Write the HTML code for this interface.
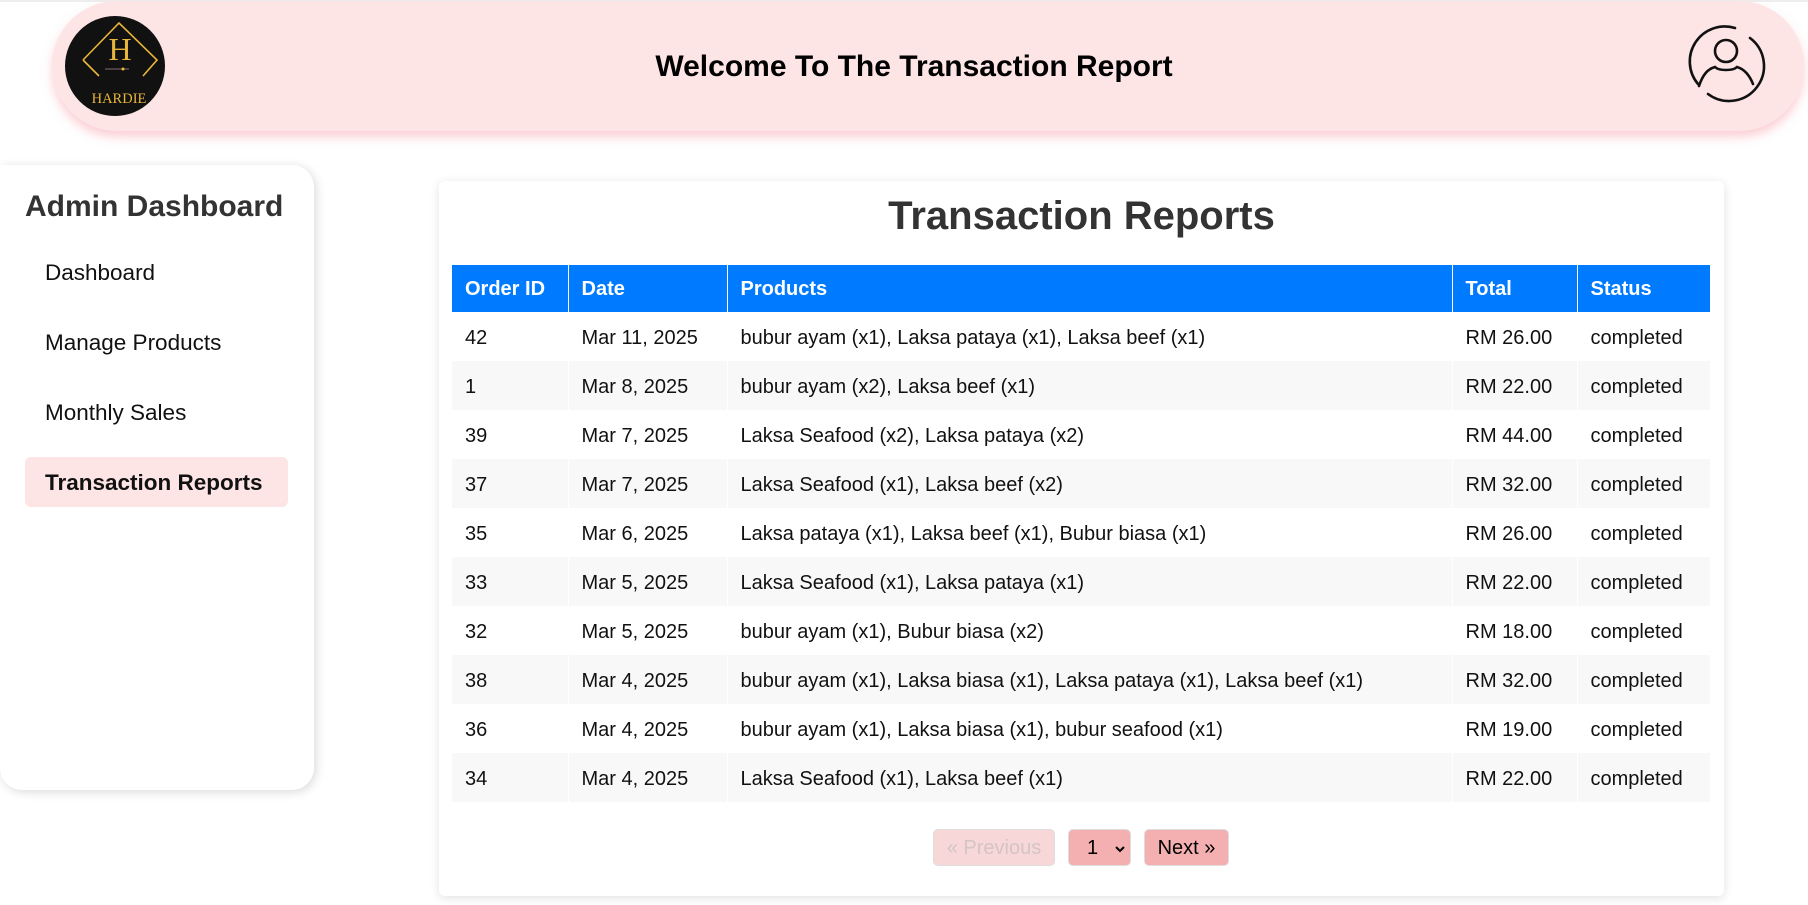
<!DOCTYPE html>
<html><head><meta charset="utf-8">
<style>
*{box-sizing:border-box;margin:0;padding:0}
body{width:1808px;height:905px;background:#fff;font-family:"Liberation Sans",Arial,sans-serif;position:relative;overflow:hidden}
.topline{position:absolute;left:0;top:0;width:1808px;height:2px;background:#eee}
.header{position:absolute;left:52px;top:1px;width:1752px;height:130px;background:#fde4e5;border-radius:70px;box-shadow:0 6px 10px rgba(250,160,170,0.5)}
.logo{position:absolute;left:65px;top:16px;width:100px;height:100px;border-radius:50%;background:#111}
.title{position:absolute;left:0;width:1828px;top:50px;text-align:center;font-weight:bold;font-size:30px;color:#000}
.user{position:absolute;left:1688px;top:24px;overflow:visible}
.side{position:absolute;left:0;top:165px;width:314px;height:625px;background:#fff;border-radius:0 22px 22px 22px;box-shadow:2px 2px 10px rgba(0,0,0,0.15)}
.nav{position:absolute;left:45px;font-size:22.5px;color:#111}
.active{position:absolute;left:25px;top:457px;width:263px;height:50px;background:#fde4e5;border-radius:6px}
.card{position:absolute;left:439px;top:181px;width:1285px;height:715px;background:#fff;border-radius:6px;box-shadow:0 2px 10px rgba(0,0,0,0.12)}
table{position:absolute;left:452px;top:265px;border-collapse:collapse;width:1258px;font-size:20px;color:#111}
th{background:#007bff;color:#fff;text-align:left;height:47px;padding:2px 13px 0;font-weight:bold;border:1px solid #fff;border-top:none;border-bottom:none}
td{height:49px;padding:4px 13px 0;border:1px solid #fff;border-top:none;border-bottom:none}
tr:nth-child(odd) td{background:#f8f8f8}
th:first-child,td:first-child{border-left:none}
th:last-child,td:last-child{border-right:none}
.pb{position:absolute;top:829px;height:37px;border-radius:5px;border:1px solid #ddd;font-size:20px;line-height:37px;text-align:center}
</style></head><body>
<div class="topline"></div>
<div class="header"></div>
<div class="logo">
<svg width="100" height="100" viewBox="0 0 100 100">
<path d="M18 44 L54 7 L92 44 L78 60 M34 60 L18 44" fill="none" stroke="#e9b63a" stroke-width="1.6"/>
<text x="55" y="44" text-anchor="middle" font-family="Liberation Serif,serif" font-size="32" fill="#e9b63a">H</text>
<line x1="40" y1="53" x2="64" y2="53" stroke="#a88" stroke-width="0.8"/>
<circle cx="58" cy="53" r="1.5" fill="#e9b63a"/>
<text x="54" y="87" text-anchor="middle" font-family="Liberation Serif,serif" font-size="14.5" fill="#e9b63a">HARDIE</text>
</svg></div>
<div class="title">Welcome To The Transaction Report</div>
<svg class="user" width="76" height="76" viewBox="0 0 76 76" fill="none" stroke="#111" stroke-width="2.6" stroke-linecap="round">
<path d="M10 60 A35 35 0 0 1 47 4"/>
<path d="M62 14 A35 35 0 0 1 20 70"/>
<circle cx="38" cy="27" r="11"/>
<path d="M11 62 C15 50 20 45 27 43 C31 47 45 47 49 43 C56 45 61 50 65 60"/>
</svg>
<div class="side"></div>
<div style="position:absolute;left:25px;top:190px;font-size:30px;color:#333;font-weight:bold">Admin Dashboard</div>
<div class="nav" style="top:260px">Dashboard</div>
<div class="nav" style="top:330px">Manage Products</div>
<div class="nav" style="top:400px">Monthly Sales</div>
<div class="active"></div>
<div class="nav" style="top:470px;font-weight:bold">Transaction Reports</div>
<div class="card"></div>
<div style="position:absolute;left:439px;width:1285px;top:194px;text-align:center;font-size:40px;color:#333;font-weight:bold">Transaction Reports</div>
<table>
<tr><th style="width:116px">Order ID</th><th style="width:159px">Date</th><th style="width:725px">Products</th><th style="width:125px">Total</th><th>Status</th></tr>
<tr><td>42</td><td>Mar 11, 2025</td><td>bubur ayam (x1), Laksa pataya (x1), Laksa beef (x1)</td><td>RM 26.00</td><td>completed</td></tr>
<tr><td>1</td><td>Mar 8, 2025</td><td>bubur ayam (x2), Laksa beef (x1)</td><td>RM 22.00</td><td>completed</td></tr>
<tr><td>39</td><td>Mar 7, 2025</td><td>Laksa Seafood (x2), Laksa pataya (x2)</td><td>RM 44.00</td><td>completed</td></tr>
<tr><td>37</td><td>Mar 7, 2025</td><td>Laksa Seafood (x1), Laksa beef (x2)</td><td>RM 32.00</td><td>completed</td></tr>
<tr><td>35</td><td>Mar 6, 2025</td><td>Laksa pataya (x1), Laksa beef (x1), Bubur biasa (x1)</td><td>RM 26.00</td><td>completed</td></tr>
<tr><td>33</td><td>Mar 5, 2025</td><td>Laksa Seafood (x1), Laksa pataya (x1)</td><td>RM 22.00</td><td>completed</td></tr>
<tr><td>32</td><td>Mar 5, 2025</td><td>bubur ayam (x1), Bubur biasa (x2)</td><td>RM 18.00</td><td>completed</td></tr>
<tr><td>38</td><td>Mar 4, 2025</td><td>bubur ayam (x1), Laksa biasa (x1), Laksa pataya (x1), Laksa beef (x1)</td><td>RM 32.00</td><td>completed</td></tr>
<tr><td>36</td><td>Mar 4, 2025</td><td>bubur ayam (x1), Laksa biasa (x1), bubur seafood (x1)</td><td>RM 19.00</td><td>completed</td></tr>
<tr><td>34</td><td>Mar 4, 2025</td><td>Laksa Seafood (x1), Laksa beef (x1)</td><td>RM 22.00</td><td>completed</td></tr>
</table>
<div class="pb" style="left:933px;width:122px;background:#f8d7d8;color:#d4c4c4">« Previous</div>
<div class="pb" style="left:1068px;width:63px;background:#f4b0b1;color:#000;text-align:left;padding-left:18px">1<svg style="position:absolute;left:46px;top:16px" width="10" height="7" viewBox="0 0 10 7"><path d="M1 1 L5 5 L9 1" fill="none" stroke="#000" stroke-width="2"/></svg></div>
<div class="pb" style="left:1144px;width:85px;background:#f4b0b1;color:#000">Next »</div>
</body></html>
